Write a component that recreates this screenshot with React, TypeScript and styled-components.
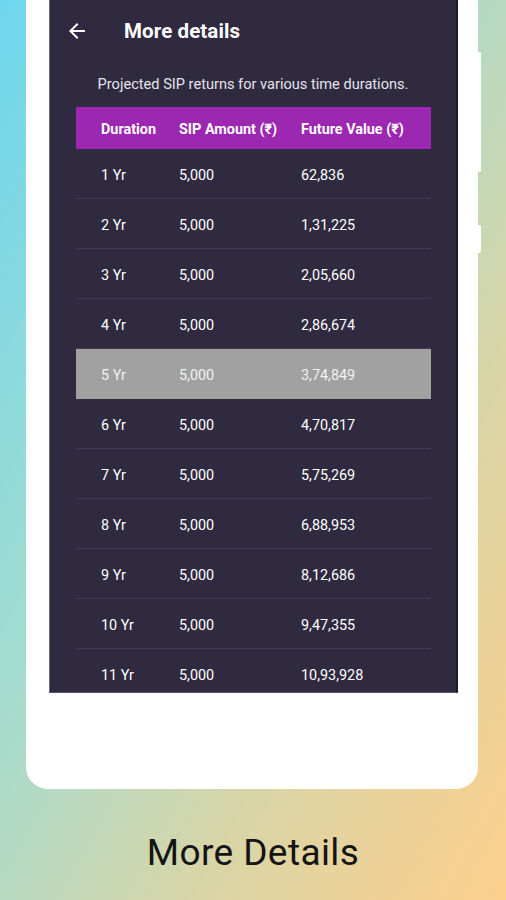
import styled, { createGlobalStyle } from 'styled-components';

const GlobalStyle = createGlobalStyle`
  html, body {
    margin: 0;
    padding: 0;
  }
  body {
    font-family: Roboto, 'Noto Sans', sans-serif;
  }
`;

const rows = [
  { year: '1 Yr', amount: '5,000', value: '62,836' },
  { year: '2 Yr', amount: '5,000', value: '1,31,225' },
  { year: '3 Yr', amount: '5,000', value: '2,05,660' },
  { year: '4 Yr', amount: '5,000', value: '2,86,674' },
  { year: '5 Yr', amount: '5,000', value: '3,74,849', active: true },
  { year: '6 Yr', amount: '5,000', value: '4,70,817' },
  { year: '7 Yr', amount: '5,000', value: '5,75,269' },
  { year: '8 Yr', amount: '5,000', value: '6,88,953' },
  { year: '9 Yr', amount: '5,000', value: '8,12,686' },
  { year: '10 Yr', amount: '5,000', value: '9,47,355' },
  { year: '11 Yr', amount: '5,000', value: '10,93,928' },
];

const Page = styled.div`
  width: 506px;
  height: 900px;
  overflow: hidden;
  background: linear-gradient(to bottom right, #6dd6ee 0%, #a2dcd0 38%, #dad5a6 70%, #fdcf8c 100%);
  display: flex;
  flex-direction: column;
  align-items: center;
`;

const Phone = styled.div`
  position: relative;
  box-sizing: border-box;
  width: 452px;
  height: 789px;
  margin-left: -2px;
  padding: 0 20px 0 23px;
  background: #ffffff;
  border-radius: 0 0 22px 22px;
`;

const SideButton = styled.div<{ $top: number; $height: number }>`
  position: absolute;
  right: -3px;
  top: ${(p) => p.$top}px;
  width: 3px;
  height: ${(p) => p.$height}px;
  background: #ffffff;
  border-radius: 0 2px 2px 0;
`;

const Screen = styled.div`
  box-sizing: border-box;
  height: 693px;
  overflow: hidden;
  background: #2f2a3f;
  border-left: 1px solid #6b6878;
  border-right: 2px solid #1e1a2b;
  border-bottom: 1px solid #55506a;
`;

const TopBar = styled.div`
  display: flex;
  align-items: center;
  height: 62px;
  padding-left: 15px;
  color: #ffffff;
`;

const BackIcon = styled.svg`
  width: 24px;
  height: 24px;
  fill: #ffffff;
`;

const Title = styled.div`
  margin-left: 35px;
  font-size: 20.5px;
  font-weight: 700;
  letter-spacing: 0.1px;
`;

const Subtitle = styled.div`
  text-align: center;
  font-size: 14.6px;
  color: #e6e4ec;
  margin-top: 6px;
  height: 39px;
  line-height: 32px;
`;

const Table = styled.div`
  margin: 0 25px 0 26px;
`;

const HeaderRow = styled.div`
  display: grid;
  grid-template-columns: 78px 122px 1fr;
  align-items: center;
  box-sizing: border-box;
  height: 42px;
  padding: 2px 0 0 25px;
  background: #9c27b0;
  color: #ffffff;
  font-size: 14.4px;
  font-weight: 700;
`;

const Row = styled.div<{ $active?: boolean }>`
  display: grid;
  grid-template-columns: 78px 122px 1fr;
  align-items: center;
  box-sizing: border-box;
  height: 50px;
  padding: 3px 0 0 25px;
  font-size: 14.4px;
  color: ${(p) => (p.$active ? '#f2f2f2' : '#ffffff')};
  background: ${(p) => (p.$active ? '#a1a1a1' : 'transparent')};
  border-bottom: 1px solid ${(p) => (p.$active ? '#a1a1a1' : '#403a52')};
`;

const Caption = styled.div`
  margin-top: 42px;
  font-size: 37px;
  color: #141414;
  letter-spacing: 0.4px;
`;

export default function App() {
  return (
    <>
      <GlobalStyle />
      <Page>
        <Phone>
          <SideButton $top={52} $height={120} />
          <SideButton $top={225} $height={28} />
          <Screen>
            <TopBar>
              <BackIcon viewBox="0 0 24 24">
                <path d="M20 11H7.83l5.59-5.59L12 4l-8 8 8 8 1.41-1.41L7.83 13H20v-2z" />
              </BackIcon>
              <Title>More details</Title>
            </TopBar>
            <Subtitle>Projected SIP returns for various time durations.</Subtitle>
            <Table>
              <HeaderRow>
                <span>Duration</span>
                <span>SIP Amount (₹)</span>
                <span>Future Value (₹)</span>
              </HeaderRow>
              {rows.map((r) => (
                <Row key={r.year} $active={r.active}>
                  <span>{r.year}</span>
                  <span>{r.amount}</span>
                  <span>{r.value}</span>
                </Row>
              ))}
            </Table>
          </Screen>
        </Phone>
        <Caption>More Details</Caption>
      </Page>
    </>
  );
}
